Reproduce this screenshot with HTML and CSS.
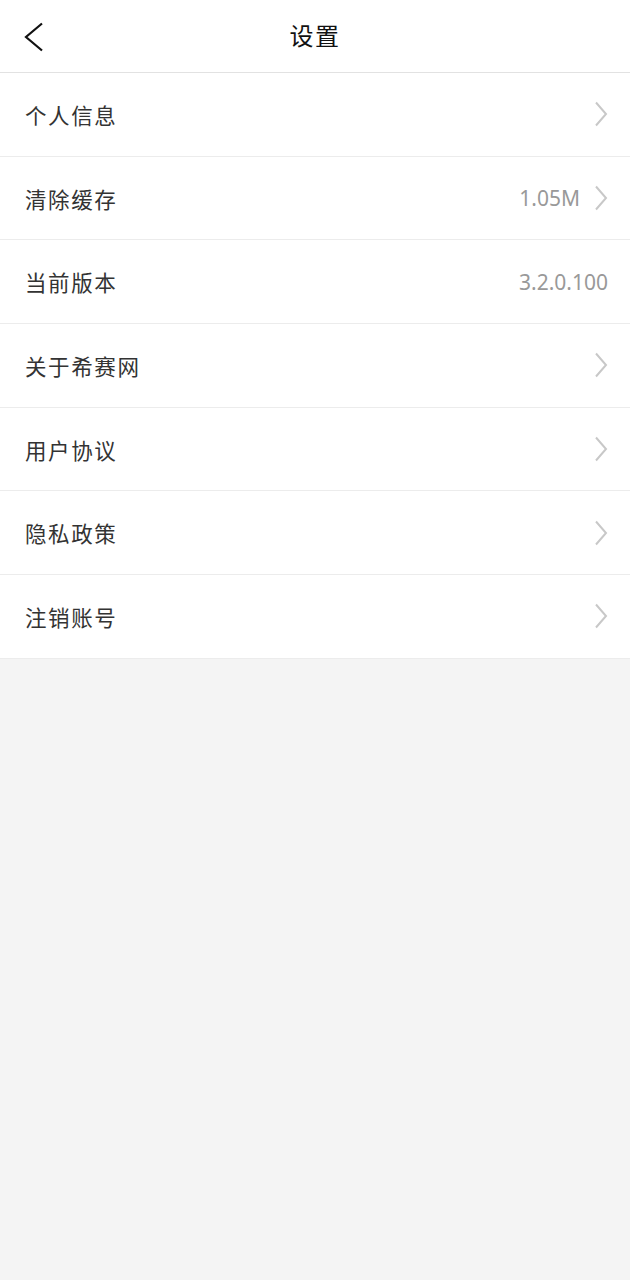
FILE: index.html
```html
<!DOCTYPE html>
<html lang="zh-CN">
<head>
<meta charset="utf-8">
<title>设置</title>
<link rel="stylesheet" href="styles.css">
</head>
<body>
<header class="nav">
  <svg class="back" width="22" height="30" viewBox="0 0 22 30"><path d="M19 1.5 L3 15 L19 28.5" fill="none" stroke="#111" stroke-width="2.2"/></svg>
  <h1 class="title">设置</h1>
</header>
<ul class="list">
  <li class="row"><span class="label">个人信息</span><span class="right"><svg class="chev" width="14" height="26" viewBox="0 0 14 26"><path d="M2 1.5 L12 13 L2 24.5" fill="none" stroke="#c8c8c8" stroke-width="2"/></svg></span></li>
  <li class="row"><span class="label">清除缓存</span><span class="right"><span class="value">1.05M</span><svg class="chev" width="14" height="26" viewBox="0 0 14 26"><path d="M2 1.5 L12 13 L2 24.5" fill="none" stroke="#c8c8c8" stroke-width="2"/></svg></span></li>
  <li class="row"><span class="label">当前版本</span><span class="right"><span class="value">3.2.0.100</span></span></li>
  <li class="row"><span class="label">关于希赛网</span><span class="right"><svg class="chev" width="14" height="26" viewBox="0 0 14 26"><path d="M2 1.5 L12 13 L2 24.5" fill="none" stroke="#c8c8c8" stroke-width="2"/></svg></span></li>
  <li class="row"><span class="label">用户协议</span><span class="right"><svg class="chev" width="14" height="26" viewBox="0 0 14 26"><path d="M2 1.5 L12 13 L2 24.5" fill="none" stroke="#c8c8c8" stroke-width="2"/></svg></span></li>
  <li class="row"><span class="label">隐私政策</span><span class="right"><svg class="chev" width="14" height="26" viewBox="0 0 14 26"><path d="M2 1.5 L12 13 L2 24.5" fill="none" stroke="#c8c8c8" stroke-width="2"/></svg></span></li>
  <li class="row"><span class="label">注销账号</span><span class="right"><svg class="chev" width="14" height="26" viewBox="0 0 14 26"><path d="M2 1.5 L12 13 L2 24.5" fill="none" stroke="#c8c8c8" stroke-width="2"/></svg></span></li>
</ul>
</body>
</html>
```
FILE: styles.css
```css
html, body {
  margin: 0;
  padding: 0;
  background: #f4f4f4;
  font-family: "Noto Sans CJK SC", "Noto Sans", sans-serif;
  height: 100%;
}
.nav {
  height: 73px;
  box-sizing: border-box;
  padding-bottom: 4px;
  background: #fff;
  border-bottom: 1px solid #e2e2e2;
  display: flex;
  align-items: center;
  justify-content: center;
  position: relative;
}
.back {
  position: absolute;
  left: 23px;
  top: 22px;
}
.title {
  margin: 0;
  font-size: 24px;
  font-weight: 400;
  color: #111;
  letter-spacing: 1.5px;
}
.list {
  list-style: none;
  margin: 0;
  padding: 0;
  background: #fff;
}
.row {
  height: 82.7px;
  border-bottom: 1px solid #ececec;
  display: flex;
  align-items: center;
  justify-content: space-between;
  padding: 0 22px 0 25px;
}
.label {
  font-size: 21.5px;
  color: #333;
  letter-spacing: 1.6px;
}
.right {
  display: flex;
  align-items: center;
  gap: 14px;
}
.value {
  font-family: "Noto Sans", "Open Sans", sans-serif;
  font-size: 21px;
  color: #999;
}
.chev {
  display: block;
}
```
